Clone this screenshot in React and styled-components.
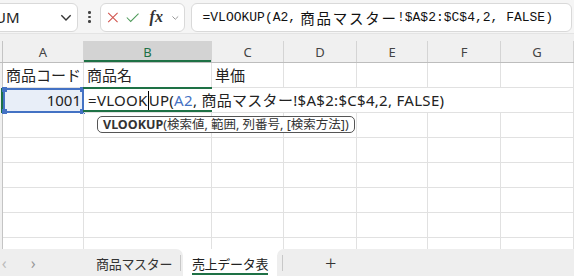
import React from 'react';
import styled, { createGlobalStyle } from 'styled-components';

/*
	:::: Styles ::::
*/
const GlobalStyle = createGlobalStyle`
	html, body {
		margin: 0;
		padding: 0;
		width: 574px;
		height: 276px;
		overflow: hidden;
		background: #ffffff;
	}
`;

const GREEN = '#1e7145';
const BLUE = '#4472c4';
const GRID = '#e1e1e1';
const COLS = '3px 81px 128px 72px 73px 71px 73px 73px';

const Page = styled.div`
	display: flex;
	flex-direction: column;
	width: 574px;
	height: 276px;
	overflow: hidden;
	font-family: "Noto Sans", "Noto Sans CJK JP", sans-serif;
	color: #222;
`;

const TopBar = styled.div`
	display: flex;
	align-items: center;
	gap: 6px;
	height: 34px;
	padding-top: 1px;
	box-sizing: border-box;
	background: #f5f5f5;
	border-bottom: 1px solid #e4e4e4;
`;

const Box = styled.div`
	display: flex;
	align-items: center;
	height: 29px;
	box-sizing: border-box;
	background: #fff;
	border: 1px solid #d9d9d9;
	border-radius: 6px;
`;

const NameBox = styled(Box)`
	width: 118px;
	margin-left: -40px;
	padding: 0 4px 0 34px;
	justify-content: space-between;
	font-size: 15px;
	color: #222;
`;

const Dots = styled.div`
	display: flex;
	flex-direction: column;
	gap: 2px;
	padding: 0 3px 0 4px;

	& > span {
		width: 2.5px;
		height: 2.5px;
		border-radius: 50%;
		background: #444;
	}
`;

const FxBox = styled(Box)`
	width: 85px;
	padding: 0 4px 0 6px;
	gap: 8px;
`;

const Fx = styled.span`
	font-family: "Liberation Serif", serif;
	font-style: italic;
	font-weight: bold;
	font-size: 16px;
	color: #333;
	margin-left: 2px;
`;

const FormulaBox = styled(Box)`
	flex: 1;
	margin-right: 2px;
	padding-left: 11px;
	font-family: "Liberation Mono", "Noto Sans CJK JP", monospace;
	font-size: 13px;
	color: #111;
	white-space: nowrap;
	overflow: hidden;
`;

const Wide = styled.span`
	font-family: "Noto Sans CJK JP", sans-serif;
	font-size: 14.5px;
	letter-spacing: 1.8px;
	margin-left: 4px;
	margin-right: -1px;
`;

const HeadStrip = styled.div`
	background: #f0f0f0;
	padding-top: 7px;
	border-bottom: 1px solid #bdbdbd;
`;

const Row = styled.div`
	display: grid;
	grid-template-columns: ${COLS};
	height: ${p => p.h || 25}px;
	flex-shrink: 0;
`;

const ColHead = styled.div`
	display: flex;
	align-items: center;
	justify-content: center;
	font-size: 13px;
	color: ${p => (p.active ? GREEN : '#444')};
	background: ${p => (p.active ? '#d3d3d3' : 'transparent')};
	border-right: 1px solid ${p => (p.active ? 'transparent' : '#d4d4d4')};
	box-shadow: ${p => (p.active ? `inset 0 -2px 0 ${GREEN}` : 'none')};
`;

const RowHead = styled.div`
	background: #f0f0f0;
	border-right: ${p => (p.active ? `2px solid ${GREEN}` : '1px solid #c4c4c4')};
`;

const Grid = styled.div`
	flex: 1;
	overflow: hidden;
	display: flex;
	flex-direction: column;
`;

const Cell = styled.div`
	position: relative;
	box-sizing: border-box;
	border-right: 1px solid ${GRID};
	border-bottom: 1px solid ${GRID};
	font-size: 15px;
	line-height: 24px;
	padding: 0 3px;
	white-space: nowrap;
	text-align: ${p => p.align || 'left'};
`;

const RefCell = styled(Cell)`
	background: #e8eef8;
	border: 2px solid ${BLUE};
	line-height: 21px;
	padding-right: 1px;
`;

const Handle = styled.span`
	position: absolute;
	width: 5px;
	height: 5px;
	background: ${p => p.color};
	${p => (p.top ? 'top: -3px;' : 'bottom: -3px;')}
	${p => (p.left ? 'left: -3px;' : 'right: -3px;')}
`;

const EditCell = styled(Cell)`
	grid-column: span 5;
	background: #fff;
	border-right: none;
	padding-left: 4px;
	letter-spacing: 0.3px;
	overflow: visible;
	z-index: 2;

	&::before {
		content: '';
		position: absolute;
		left: -1px;
		top: -1px;
		width: 129px;
		height: 25px;
		box-sizing: border-box;
		border-top: 2px solid ${GREEN};
		border-bottom: 2px solid ${GREEN};
		pointer-events: none;
	}
`;

const RefText = styled.span`
	color: ${BLUE};
`;

const Caret = styled.span`
	display: inline-block;
	width: 1px;
	height: 19px;
	background: #000;
	vertical-align: -4px;
`;

const Tip = styled.div`
	position: absolute;
	left: 13px;
	top: 28px;
	padding: 0 5px;
	height: 17px;
	box-sizing: border-box;
	background: #fff;
	border: 1px solid #555;
	border-radius: 5px;
	font-size: 12.5px;
	letter-spacing: 0;
	line-height: 15px;
	color: #333;
	white-space: nowrap;

	& > b {
		font-weight: 700;
	}
`;

const TabBar = styled.div`
	display: grid;
	grid-template-columns: 183px 94px 1fr;
	height: 27px;
	flex-shrink: 0;
	background: #fff;
`;

const TabGroup = styled.div`
	display: flex;
	align-items: center;
	background: #eeeeee;
	border-radius: ${p => (p.side === 'left' ? '0 7px 0 0' : '7px 0 0 0')};
	font-size: 13px;
	letter-spacing: -0.3px;
	color: #333;
	white-space: nowrap;
	overflow: hidden;
`;

const Arrow = styled.span`
	flex-shrink: 0;
	font-size: 16px;
	color: ${p => p.color};
	width: ${p => p.w}px;
	text-align: center;
`;

const TabLabel = styled.span`
	flex-shrink: 0;
	margin-left: ${p => p.ml || 0}px;
	padding-top: 2px;
`;

const Sep = styled.span`
	flex-shrink: 0;
	width: 1px;
	height: 16px;
	background: #c8c8c8;
	margin-left: ${p => p.ml || 0}px;
`;

const ActiveTab = styled.div`
	display: flex;
	justify-content: center;
	align-items: center;
	font-size: 13px;
	letter-spacing: -0.3px;
	white-space: nowrap;
	color: #222;

	& > span {
		padding-top: 4px;
		border-bottom: 2.5px solid ${GREEN};
	}
`;

const Plus = styled.span`
	margin-left: 42px;
	font-size: 20px;
	font-weight: 300;
	color: #333;
`;

const Chevron = ({ size = 12, color = '#333' }) => (
	<svg width={size} height={size} viewBox="0 0 12 12">
		<path d="M2 4.5 L6 8.5 L10 4.5" fill="none" stroke={color} strokeWidth="1.2" />
	</svg>
);

const letters = ['A', 'B', 'C', 'D', 'E', 'F', 'G'];

const EmptyCells = ({ n }) =>
	Array.from({ length: n }).map((_, i) => <Cell key={i} />);

const App = () => {
	return (
		<Page>
			<GlobalStyle />
			<TopBar>
				<NameBox>
					<span>UM</span>
					<Chevron size={14} />
				</NameBox>
				<Dots><span /><span /><span /></Dots>
				<FxBox>
					<svg width="15" height="15" viewBox="0 0 15 15">
						<path d="M1.5 1.5 L13.5 13.5 M13.5 1.5 L1.5 13.5" stroke="#d0504a" strokeWidth="1.3" />
					</svg>
					<svg width="17" height="15" viewBox="0 0 17 15">
						<path d="M1 7.5 L6 12.5 L16 2.5" fill="none" stroke="#4e9a5a" strokeWidth="1.3" />
					</svg>
					<Fx>fx</Fx>
					<Chevron size={11} color="#888" />
				</FxBox>
				<FormulaBox>
					=VLOOKUP(A2,<Wide>商品マスター</Wide>!$A$2:$C$4,2, FALSE)
				</FormulaBox>
			</TopBar>

			<HeadStrip>
				<Row h={21}>
					<RowHead />
					{letters.map(l => (
						<ColHead key={l} active={l === 'B'}>{l}</ColHead>
					))}
				</Row>
			</HeadStrip>

			<Grid>
				<Row>
					<RowHead />
					<Cell>商品コード</Cell>
					<Cell>商品名</Cell>
					<Cell>単価</Cell>
					<EmptyCells n={4} />
				</Row>
				<Row>
					<RowHead active />
					<RefCell align="right">
						1001
						<Handle color={BLUE} top left />
						<Handle color={BLUE} top />
						<Handle color={BLUE} left />
						<Handle color={BLUE} />
					</RefCell>
					<EditCell>
						=VLOOK<Caret />UP(<RefText>A2</RefText>, 商品マスター!$A$2:$C$4,2, FALSE)
						<Tip>
							<b>VLOOKUP</b>(検索値, 範囲, 列番号, [検索方法])
						</Tip>
					</EditCell>
					<Cell />
				</Row>
				{[3, 4, 5, 6, 7, 8].map(r => (
					<Row key={r}>
						<RowHead />
						<EmptyCells n={7} />
					</Row>
				))}
			</Grid>

			<TabBar>
				<TabGroup side="left">
					<Arrow w={8} color="#bbb">&lsaquo;</Arrow>
					<Arrow w={50} color="#999">&rsaquo;</Arrow>
					<TabLabel ml={38}>商品マスター</TabLabel>
					<Sep ml={8} />
				</TabGroup>
				<ActiveTab>
					<span>売上データ表</span>
				</ActiveTab>
				<TabGroup side="right">
					<Sep ml={5} />
					<Plus>+</Plus>
				</TabGroup>
			</TabBar>
		</Page>
	);
};

export default App;
